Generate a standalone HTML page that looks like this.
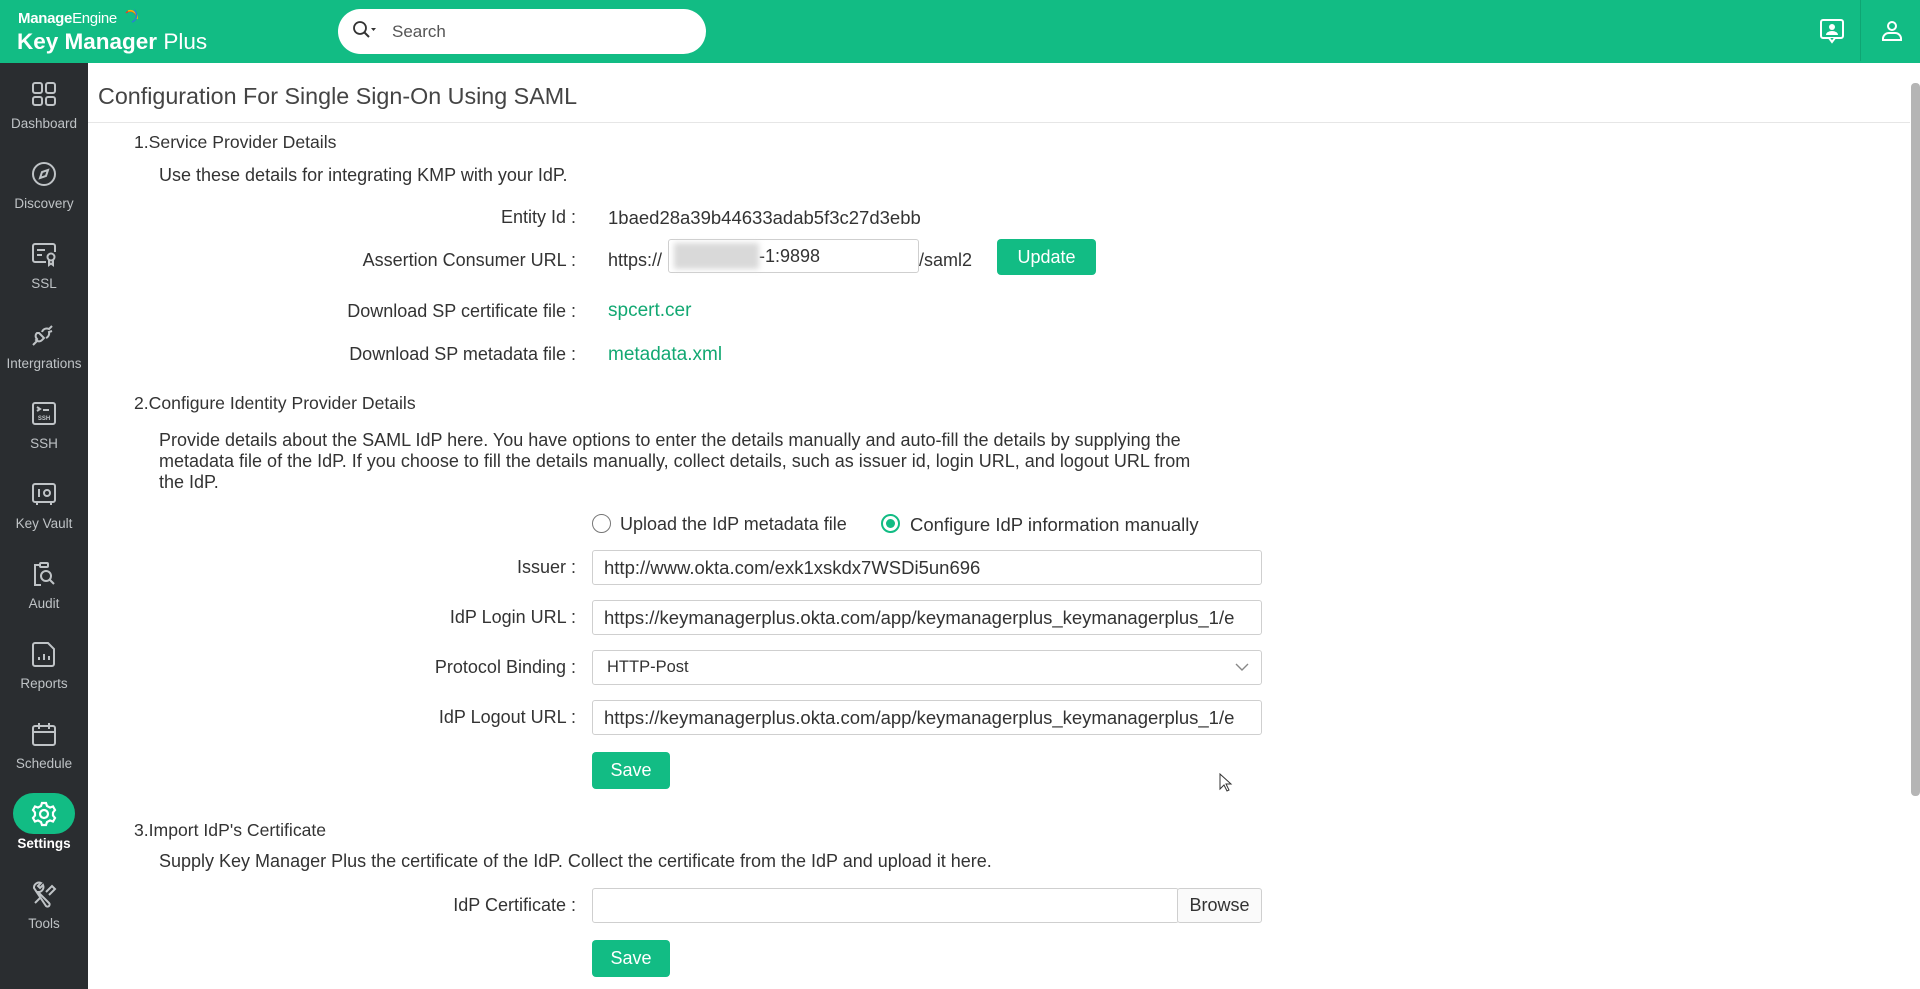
<!DOCTYPE html>
<html><head><meta charset="utf-8"><style>
*{box-sizing:border-box;margin:0;padding:0}
body{width:1920px;height:989px;overflow:hidden;font-family:"Liberation Sans",sans-serif;color:#333;background:#fff;position:relative}
.a{position:absolute;white-space:nowrap}
#hdr{position:absolute;left:0;top:0;width:1920px;height:63px;background:#12bc84}
#side{position:absolute;left:0;top:63px;width:88px;height:926px;background:#2a2d30}
.nav{position:absolute;left:0;width:88px;text-align:center;color:#bfc3c6;font-size:13.5px}
.nav svg{display:block;margin:0 auto 8px}
.lbl{font-size:18px;text-align:right;width:450px;left:126px}
.inp{position:absolute;border:1px solid #cfcfcf;border-radius:3px;background:#fff;font-size:18.5px;padding-left:11px;display:flex;align-items:center;color:#333}
.btn{position:absolute;background:#12bc84;color:#fff;border-radius:4px;font-size:18px;display:flex;align-items:center;justify-content:center}
.h{font-size:17.6px;color:#333}
.g{color:#12a872}
</style></head><body>
<div id="hdr">
  <div class="a" style="left:18px;top:10px;color:#fff;font-size:15px;font-weight:bold;letter-spacing:-0.3px">Manage<span style="font-weight:normal">Engine</span></div>
  <svg class="a" style="left:124px;top:7px" width="14" height="16" viewBox="0 0 14 16"><path d="M2 6 A6 6 0 0 1 12 8" stroke="#e63b2e" stroke-width="1.5" fill="none"/><path d="M4 4 A7 7 0 0 1 13 12" stroke="#f5b800" stroke-width="1.5" fill="none"/><path d="M10 3 A7 7 0 0 1 8 15" stroke="#2a7fd4" stroke-width="1.5" fill="none"/></svg>
  <div class="a" style="left:17px;top:29px;color:#fff;font-size:22.5px"><span style="font-weight:bold">Key Manager</span> Plus</div>
  <div class="a" style="left:338px;top:9px;width:368px;height:45px;background:#fff;border-radius:23px"></div>
  <svg class="a" style="left:352px;top:20px" width="26" height="20" viewBox="0 0 26 20"><circle cx="8" cy="8" r="6" stroke="#333" stroke-width="1.8" fill="none"/><path d="M12.5 12.5 L17 17" stroke="#333" stroke-width="2"/><path d="M19 8 h5 l-2.5 3z" fill="#333"/></svg>
  <div class="a" style="left:392px;top:22px;font-size:17px;color:#555">Search</div>
  <svg class="a" style="left:1819px;top:18px" width="26" height="28" viewBox="0 0 26 28"><rect x="2" y="2" width="22" height="18" rx="2" stroke="#fff" stroke-width="2" fill="none"/><path d="M10 20 l3 4 l3 -4" stroke="#fff" stroke-width="2" fill="#12bc84"/><circle cx="13" cy="9" r="3" fill="#fff"/><path d="M7 17 a6 4 0 0 1 12 0z" fill="#fff"/></svg>
  <div class="a" style="left:1860px;top:0;width:1px;height:61px;background:#0fa573"></div>
  <svg class="a" style="left:1880px;top:19px" width="24" height="24" viewBox="0 0 24 24"><circle cx="12" cy="7" r="4" stroke="#fff" stroke-width="2" fill="none"/><path d="M3 21 v-2 a6 6 0 0 1 6-5 h6 a6 6 0 0 1 6 5 v2z" stroke="#fff" stroke-width="2" fill="none"/></svg>
</div>
<div id="side">
  <div class="nav" style="top:17px"><svg width="28" height="28" viewBox="0 0 28 28" fill="none" stroke="#bfc3c6" stroke-width="2"><rect x="3" y="3" width="9" height="10" rx="2"/><rect x="16" y="3" width="9" height="10" rx="2"/><rect x="3" y="17" width="9" height="8" rx="2"/><rect x="16" y="17" width="9" height="8" rx="2"/></svg>Dashboard</div>
  <div class="nav" style="top:97px"><svg width="28" height="28" viewBox="0 0 28 28" fill="none" stroke="#bfc3c6" stroke-width="2"><circle cx="14" cy="14" r="11"/><path d="M18 10 l-2 6 l-6 2 l2-6z"/></svg>Discovery</div>
  <div class="nav" style="top:177px"><svg width="28" height="28" viewBox="0 0 28 28" fill="none" stroke="#bfc3c6" stroke-width="2"><path d="M16 22 H5 a2 2 0 0 1-2-2 V6 a2 2 0 0 1 2-2 h18 a2 2 0 0 1 2 2 v6"/><path d="M7 10h8M7 15h5"/><circle cx="21" cy="17" r="3.5"/><path d="M19 20 v5 l2-1.5 l2 1.5 v-5"/></svg>SSL</div>
  <div class="nav" style="top:257px"><svg width="28" height="28" viewBox="0 0 28 28" fill="none" stroke="#bfc3c6" stroke-width="2"><path d="M3 25 l5-5"/><path d="M8 15 l5 5 l-2 2 a4 4 0 0 1-6 0 l1-1 a4 4 0 0 1 0-6z" transform="translate(1,-2)"/><path d="M12 12 a5 5 0 0 1 7-3 l3-3"/><path d="M16 18 a5 5 0 0 0 3-6 l3-1"/></svg>Intergrations</div>
  <div class="nav" style="top:337px"><svg width="28" height="28" viewBox="0 0 28 28" fill="none" stroke="#bfc3c6" stroke-width="2"><rect x="3" y="3" width="22" height="21" rx="2"/><path d="M7 7 l3 2 l-3 2 M13 10h6"/><text x="14" y="20" font-size="6" fill="#bfc3c6" stroke="none" text-anchor="middle" font-weight="bold" font-family="Liberation Sans">SSH</text></svg>SSH</div>
  <div class="nav" style="top:417px"><svg width="28" height="28" viewBox="0 0 28 28" fill="none" stroke="#bfc3c6" stroke-width="2"><rect x="3" y="4" width="22" height="18" rx="2"/><path d="M9 9v8"/><circle cx="17" cy="13" r="3"/><path d="M7 22v3M21 22v3"/></svg>Key Vault</div>
  <div class="nav" style="top:497px"><svg width="28" height="28" viewBox="0 0 28 28" fill="none" stroke="#bfc3c6" stroke-width="2"><path d="M9 5 H5 v20 h6"/><rect x="10" y="3" width="8" height="4" rx="1"/><circle cx="16" cy="16" r="5"/><path d="M20 20 l4 4"/></svg>Audit</div>
  <div class="nav" style="top:577px"><svg width="28" height="28" viewBox="0 0 28 28" fill="none" stroke="#bfc3c6" stroke-width="2"><path d="M5 3 h13 l6 6 v15 a2 2 0 0 1-2 2 H5 a2 2 0 0 1-2-2 V5 a2 2 0 0 1 2-2z"/><path d="M9 20v-3M14 20v-6M19 20v-4"/></svg>Reports</div>
  <div class="nav" style="top:657px"><svg width="28" height="28" viewBox="0 0 28 28" fill="none" stroke="#bfc3c6" stroke-width="2"><rect x="3" y="6" width="22" height="19" rx="2"/><path d="M3 12h22M9 3v6M19 3v6"/></svg>Schedule</div>
  <div class="a" style="left:13px;top:730px;width:62px;height:41px;background:#12bc84;border-radius:21px"></div>
  <div class="nav" style="top:737px;color:#fff;font-weight:bold"><svg width="28" height="28" viewBox="0 0 28 28" fill="none" stroke="#fff" stroke-width="2.2"><path d="M12 3h4l1 3 3 1.5 3-1 2 3.5-2 2.5v3l2 2.5-2 3.5-3-1-3 1.5-1 3h-4l-1-3-3-1.5-3 1-2-3.5 2-2.5v-3l-2-2.5 2-3.5 3 1 3-1.5z"/><circle cx="14" cy="14" r="4"/></svg>Settings</div>
  <div class="nav" style="top:817px"><svg width="28" height="28" viewBox="0 0 28 28" fill="none" stroke="#bfc3c6" stroke-width="2"><path d="M4 8 a5 5 0 0 1 7-5 l-3 3 2 2 3-3 a5 5 0 0 1-5 7 l11 11 a2 2 0 0 1-3 3z"/><path d="M16 12 l6-6 3 3-6 6 M5 23 l6-6"/></svg>Tools</div>
</div>
<div class="a" style="left:98px;top:83px;font-size:23.3px;color:#444">Configuration For Single Sign-On Using SAML</div>
<div class="a" style="left:88px;top:122px;width:1822px;height:1px;background:#e6e6e6"></div>
<div class="a" style="left:1911px;top:83px;width:9px;height:713px;background:#b5b5b5;border-radius:4px"></div>

<div class="a h" style="left:134px;top:132px">1.Service Provider Details</div>
<div class="a" style="left:159px;top:165px;font-size:18px">Use these details for integrating KMP with your IdP.</div>
<div class="a lbl" style="top:207px">Entity Id :</div>
<div class="a" style="left:608px;top:207px;font-size:18.5px">1baed28a39b44633adab5f3c27d3ebb</div>
<div class="a lbl" style="top:250px">Assertion Consumer URL :</div>
<div class="a" style="left:608px;top:250px;font-size:18px">https://</div>
<div class="inp" style="left:668px;top:239px;width:251px;height:34px;padding-left:0;font-size:18px"><div style="width:85px;height:26px;margin-left:5px;background:#d9d9d9;filter:blur(3px)"></div>-1:9898</div>
<div class="a" style="left:919px;top:250px;font-size:18px">/saml2</div>
<div class="btn" style="left:997px;top:239px;width:99px;height:36px">Update</div>
<div class="a lbl" style="top:301px">Download SP certificate file :</div>
<div class="a g" style="left:608px;top:300px;font-size:19px">spcert.cer</div>
<div class="a lbl" style="top:344px">Download SP metadata file :</div>
<div class="a g" style="left:608px;top:344px;font-size:19px">metadata.xml</div>

<div class="a h" style="left:134px;top:393px">2.Configure Identity Provider Details</div>
<div class="a" style="left:159px;top:430px;font-size:18px;line-height:20.8px;white-space:normal;width:1035px">Provide details about the SAML IdP here. You have options to enter the details manually and auto-fill the details by supplying the metadata file of the IdP. If you choose to fill the details manually, collect details, such as issuer id, login URL, and logout URL from the IdP.</div>
<div class="a" style="left:592px;top:514px;width:19px;height:19px;border:1.5px solid #777;border-radius:50%"></div>
<div class="a" style="left:620px;top:514px;font-size:18px">Upload the IdP metadata file</div>
<div class="a" style="left:881px;top:514px;width:19px;height:19px;border:2px solid #12bc84;border-radius:50%"></div>
<div class="a" style="left:886px;top:519px;width:9px;height:9px;background:#12bc84;border-radius:50%"></div>
<div class="a" style="left:910px;top:514px;font-size:18.5px">Configure IdP information manually</div>
<div class="a lbl" style="top:557px">Issuer :</div>
<div class="inp" style="left:592px;top:550px;width:670px;height:35px">http://www.okta.com/exk1xskdx7WSDi5un696</div>
<div class="a lbl" style="top:607px">IdP Login URL :</div>
<div class="inp" style="left:592px;top:600px;width:670px;height:35px">https://keymanagerplus.okta.com/app/keymanagerplus_keymanagerplus_1/e</div>
<div class="a lbl" style="top:657px">Protocol Binding :</div>
<div class="inp" style="left:592px;top:650px;width:670px;height:35px;padding-left:14px;font-size:16.5px">HTTP-Post</div>
<svg class="a" style="left:1234px;top:661px" width="16" height="12" viewBox="0 0 16 12"><path d="M2 3 l6 6 l6 -6" stroke="#888" stroke-width="1.4" fill="none"/></svg>
<div class="a lbl" style="top:707px">IdP Logout URL :</div>
<div class="inp" style="left:592px;top:700px;width:670px;height:35px">https://keymanagerplus.okta.com/app/keymanagerplus_keymanagerplus_1/e</div>
<div class="btn" style="left:592px;top:752px;width:78px;height:37px">Save</div>
<svg class="a" style="left:1219px;top:773px" width="14" height="20" viewBox="0 0 14 20"><path d="M1 1 v15 l4-4 l3 6 l2-1 l-3-6 h5z" fill="#fff" stroke="#333" stroke-width="1"/></svg>

<div class="a h" style="left:134px;top:820px">3.Import IdP's Certificate</div>
<div class="a" style="left:159px;top:851px;font-size:18px">Supply Key Manager Plus the certificate of the IdP. Collect the certificate from the IdP and upload it here.</div>
<div class="a lbl" style="top:895px">IdP Certificate :</div>
<div class="inp" style="left:592px;top:888px;width:587px;height:35px"></div>
<div class="inp" style="left:1177px;top:888px;width:85px;height:35px;justify-content:center;padding:0;background:#fafafa;font-size:18px">Browse</div>
<div class="btn" style="left:592px;top:940px;width:78px;height:37px">Save</div>
</body></html>
